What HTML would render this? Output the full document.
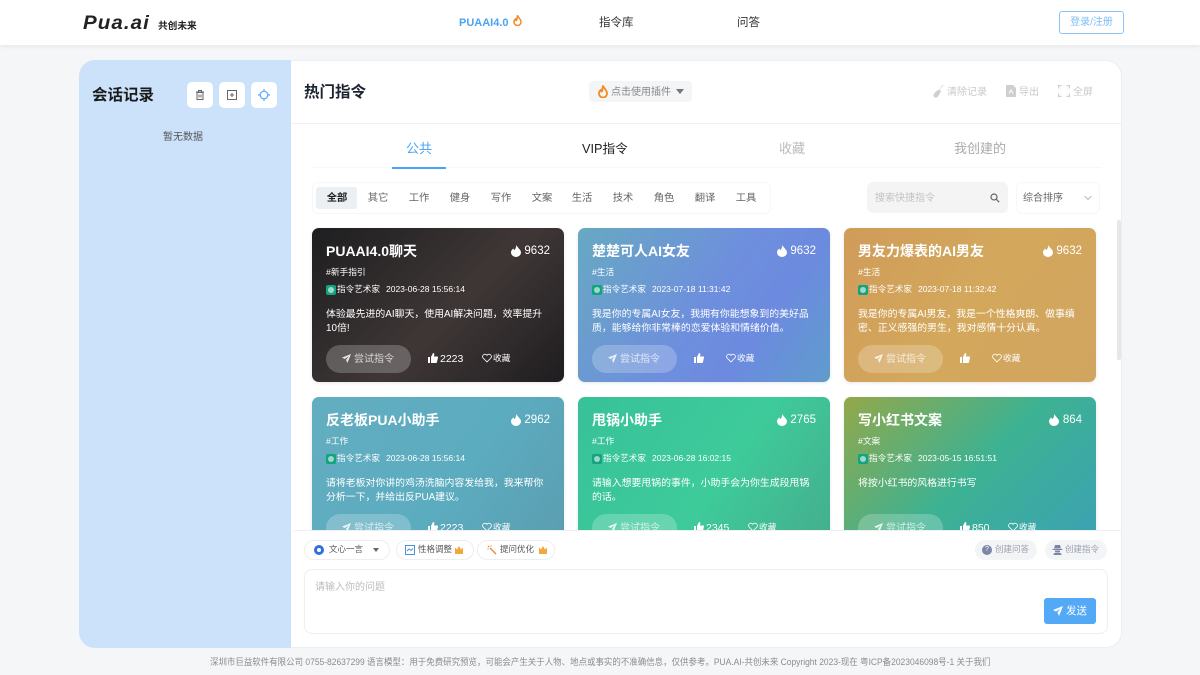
<!DOCTYPE html>
<html lang="zh"><head><meta charset="utf-8"><title>PUA.AI</title>
<style>
*{box-sizing:border-box;margin:0;padding:0}
html,body{width:1200px;height:675px;overflow:hidden}
body{background:#f5f6f8;font-family:"Liberation Sans","Noto Sans CJK SC",sans-serif;color:#222;position:relative;filter:blur(.3px)}
.a{position:absolute;white-space:nowrap}
svg{display:block}
.hdr{left:0;top:0;width:1200px;height:45px;background:#fff;box-shadow:0 1px 5px rgba(0,0,0,.08);z-index:3}
.main{left:79px;top:60px;width:1043px;height:588px;background:#fff;border-radius:16px;border:1px solid #eceef1;overflow:hidden}
.side{left:79px;top:60px;width:212px;height:588px;background:#cbe2fa;border-radius:16px 0 0 16px}
.sb{width:26px;height:26px;background:#fff;border-radius:5px;top:82px}
.sb svg{position:absolute;left:7px;top:7px}
.card{position:absolute;width:252px;height:154px;border-radius:7px;color:#fff;overflow:hidden;box-shadow:0 1px 3px rgba(0,0,0,.1)}
.card .a{line-height:1}
.t{left:14px;top:16px;font-size:14px;font-weight:700}
.hot{right:14px;top:18px;font-size:11.5px}
.fl{top:17px}
.tag{left:14px;top:40px;font-size:8.7px}
.av{left:14px;top:57px;width:10px;height:10px;border-radius:2px;background:#12a37f}
.av:after{content:"";position:absolute;left:2px;top:2px;width:6px;height:6px;border-radius:50%;background:#9fd8c8}
.au{left:25px;top:57px;font-size:8.6px}
.dt{left:74px;top:57px;font-size:8.5px}
.d{left:14px;top:80px;width:226px;font-size:9.9px;line-height:14px!important;white-space:normal;height:30px}
.btn{left:14px;top:117px;width:85px;height:28px;border-radius:14px;background:rgba(255,255,255,.22);font-size:10px;line-height:30px!important;padding-left:28px;color:rgba(255,255,255,.72)}
.btn svg{position:absolute;left:16px;top:9px}
.lk{left:116px;top:126px;font-size:10.5px;padding-left:12px}
.lk svg{position:absolute;left:0;top:-1px}
.fav{top:125px;font-size:8.7px;padding-left:11px;line-height:11px!important}
.fav svg{position:absolute;left:0;top:0}
.cat{top:192px;font-size:10.3px;color:#666;line-height:13px;width:30px;text-align:center}
.pill{top:540px;height:20px;border:1px solid #eceef1;border-radius:10px;background:#fff;font-size:8.5px;line-height:17px;color:#555}
.gp{top:540px;height:20px;border-radius:10px;background:#f3f4f6;font-size:8.5px;line-height:19px;color:#9a9fae}
.tool{top:87px;font-size:10px;color:#c9c9c9;line-height:12px}
</style></head><body>

<div class="a hdr"></div>
<div class="a" style="left:83px;top:14px;font-size:19px;font-weight:700;font-style:italic;letter-spacing:1px;color:#222;z-index:4;line-height:20px;transform-origin:left;transform:scaleX(1.08)">Pua.ai</div>
<div class="a" style="left:158px;top:21px;font-size:9.7px;font-weight:700;color:#222;z-index:4;line-height:12px">共创未来</div>
<div class="a" style="left:459px;top:16px;font-size:11px;font-weight:700;color:#4aa3f5;z-index:4;line-height:14px">PUAAI4.0</div>
<svg class="a" style="left:513px;top:15px;z-index:4" width="9" height="11" viewBox="0 0 9 11"><path d="M4.5.5C5 2.500 8 4 8 7a3.500 3.500 0 0 1-7 0c0-1.500.8-2.500 1.500-3 0 1 .5 1.500 1 1.500C4.500 4 4 2 4.500.5z" fill="none" stroke="#f58a1f" stroke-width="1.500"/></svg>
<div class="a" style="left:599px;top:15px;font-size:11.5px;color:#333;z-index:4;line-height:16px">指令库</div>
<div class="a" style="left:737px;top:15px;font-size:11.5px;color:#333;z-index:4;line-height:16px">问答</div>
<div class="a" style="left:1059px;top:11px;width:65px;height:23px;border:1px solid #8cc6f8;border-radius:3px;font-size:10px;line-height:22px;text-align:center;color:#7dbdf6;z-index:4">登录/注册</div>

<div class="a main"></div>
<div class="a side"></div>
<div class="a" style="left:92px;top:86px;font-size:15.5px;font-weight:700;line-height:19px;color:#1a1a1a">会话记录</div>
<div class="a sb" style="left:187px"><svg width="12" height="12" viewBox="0 0 12 12" fill="none" stroke="#666" stroke-width="1"><path d="M3 3.500h6v7H3zM2 3h8M4.500 3V1.500h3V3M5 5.500v3M7 5.500v3"/></svg></div>
<div class="a sb" style="left:219px"><svg width="12" height="12" viewBox="0 0 12 12" fill="none" stroke="#666" stroke-width="1"><path d="M1.500 1.500h9v9h-9zM6 4v4M4 6h4"/></svg></div>
<div class="a sb" style="left:251px"><svg width="12" height="12" viewBox="0 0 12 12" fill="none" stroke="#5aa9f6" stroke-width="1.200"><circle cx="6" cy="6" r="3.800"/><path d="M6 0v2M6 10v2M0 6h2M10 6h2"/></svg></div>
<div class="a" style="left:163px;top:131px;font-size:10px;color:#555;line-height:13px">暂无数据</div>

<div class="a" style="left:304px;top:83px;font-size:15.5px;font-weight:700;color:#1c2430;line-height:20px">热门指令</div>
<div class="a" style="left:589px;top:81px;width:103px;height:21px;background:#f4f5f6;border-radius:4px"></div>
<svg class="a" style="left:598px;top:85px" width="10" height="13" viewBox="0 0 10 13"><path d="M5 .5C5.500 3 9 5 9 8.500a4 4 0 0 1-8 0C1 6.500 2 5.500 2.800 5c0 1 .4 1.500 1 1.500C4.800 5 4.500 2.500 5 .5z" fill="none" stroke="#f58a1f" stroke-width="1.800"/></svg>
<div class="a" style="left:611px;top:86px;font-size:10px;color:#888;line-height:13px">点击使用插件</div>
<div class="a" style="left:676px;top:89px;width:0;height:0;border:4px solid transparent;border-top:5px solid #777;border-bottom:0"></div>
<svg class="a" style="left:932px;top:85px" width="12" height="13" viewBox="0 0 12 13"><path d="M11.500 0 7.500 4.500 9 6 7.500 9.500 5 12.500H1.500l1-2-1.500.5 1.500-3L5 5.500l1.500-.3L10.500 0z" fill="#cfcfcf"/></svg>
<div class="a tool" style="left:947px">清除记录</div>
<svg class="a" style="left:1006px;top:85px" width="10" height="12" viewBox="0 0 10 12"><path d="M0 0h7l3 3v9H0z" fill="#cfcfcf"/><path d="M3 8.500 5 5l2 3.500" stroke="#fff" fill="none"/></svg>
<div class="a tool" style="left:1019px">导出</div>
<svg class="a" style="left:1058px;top:85px" width="12" height="12" viewBox="0 0 12 12" fill="none" stroke="#cfcfcf" stroke-width="1.200"><path d="M.6 3.500V.6h3M8.500.6h2.900v2.900M11.400 8.500v2.900H8.500M3.500 11.400H.6V8.500"/></svg>
<div class="a tool" style="left:1073px">全屏</div>
<div class="a" style="left:291px;top:123px;width:830px;height:1px;background:#f0f1f3"></div>

<div class="a" style="left:406px;top:141px;font-size:13px;color:#4aa3f5;line-height:16px">公共</div>
<div class="a" style="left:582px;top:141px;font-size:12.7px;color:#222;line-height:16px">VIP指令</div>
<div class="a" style="left:779px;top:141px;font-size:13px;color:#bbb;line-height:16px">收藏</div>
<div class="a" style="left:954px;top:141px;font-size:13px;color:#aaa;line-height:16px">我创建的</div>
<div class="a" style="left:312px;top:167px;width:790px;height:1px;background:#f7f8f9"></div>
<div class="a" style="left:392px;top:167px;width:54px;height:1.500px;background:#4aa3f5"></div>

<div class="a" style="left:312px;top:182px;width:459px;height:32px;border:1px solid #f6f7f8;border-radius:6px"></div>
<div class="a" style="left:316px;top:187px;width:41px;height:22px;background:#edf0f3;border-radius:3px"></div>
<div class="a cat" style="left:322px;color:#222;font-weight:700">全部</div>
<div class="a cat" style="left:363px">其它</div>
<div class="a cat" style="left:404px">工作</div>
<div class="a cat" style="left:445px">健身</div>
<div class="a cat" style="left:486px">写作</div>
<div class="a cat" style="left:527px">文案</div>
<div class="a cat" style="left:567px">生活</div>
<div class="a cat" style="left:608px">技术</div>
<div class="a cat" style="left:649px">角色</div>
<div class="a cat" style="left:690px">翻译</div>
<div class="a cat" style="left:731px">工具</div>

<div class="a" style="left:867px;top:182px;width:141px;height:31px;background:#f4f4f5;border-radius:6px"></div>
<div class="a" style="left:875px;top:192px;font-size:10px;color:#c3c3c3;line-height:13px">搜索快捷指令</div>
<svg class="a" style="left:990px;top:193px" width="10" height="10" viewBox="0 0 10 10" fill="none" stroke="#666" stroke-width="1.200"><circle cx="4" cy="4" r="3"/><path d="m6.200 6.200 3 3"/></svg>
<div class="a" style="left:1016px;top:182px;width:84px;height:32px;border:1px solid #f6f7f8;border-radius:6px"></div>
<div class="a" style="left:1023px;top:192px;font-size:10px;color:#666;line-height:13px">综合排序</div>
<svg class="a" style="left:1084px;top:195px" width="8" height="6" viewBox="0 0 8 6" fill="none" stroke="#bbb"><path d="m.5 1 3.500 3.500L7.500 1"/></svg>
<div class="a" style="left:1117px;top:220px;width:4px;height:140px;background:#e6e7e9;border-radius:2px"></div>

<svg width="0" height="0" style="position:absolute"><defs>
<symbol id="fl" viewBox="0 0 10 12"><path d="M5.500 0C6 2.500 10 4.500 10 7.500a5 4.500 0 0 1-10 0C0 5.500 1.500 4 2.500 3.500c0 1 .5 1.500 1 1.500C4.800 4 5 1.500 5.500 0z" fill="#fff"/></symbol>
<symbol id="pl" viewBox="0 0 10 10"><path d="M10 0 0 4l3 1.500L7.500 2.500 4.500 6.500 6 10z" fill="currentColor"/></symbol>
<symbol id="th" viewBox="0 0 10 10"><path d="M0 4h2v6H0zM3 4l2-4c1 0 1.500 .7 1.300 1.700L6 3.500h3.200c.6 0 .9.500.8 1l-1 4.500c-.1.600-.5 1-1 1H3z" fill="#fff"/></symbol>
<symbol id="ht" viewBox="0 0 11 10"><path d="M5.500 9.300 1.200 5A2.600 2.600 0 0 1 5 1.500l.5.600.5-.6A2.600 2.600 0 0 1 9.800 5z" fill="none" stroke="#fff" stroke-width=".9"/></symbol>
</defs></svg>

<div class="a" style="left:291px;top:224px;width:826px;height:307px;overflow:hidden">

<div class="card" style="left:21px;top:4px;background:linear-gradient(135deg,#1e1e20 0%,#3f3736 55%,#1f1d20 100%)">
<div class="a t">PUAAI4.0聊天</div><svg class="a fl" style="left:199px" width="10" height="12"><use href="#fl"/></svg><div class="a hot">9632</div>
<div class="a tag">#新手指引</div><div class="a av"></div><div class="a au">指令艺术家</div><div class="a dt">2023-06-28 15:56:14</div>
<div class="a d">体验最先进的AI聊天&#65292;使用AI解决问题&#65292;效率提升10倍!</div>
<div class="a btn"><svg width="9" height="9" style="color:rgba(255,255,255,.85)"><use href="#pl"/></svg>尝试指令</div>
<div class="a lk"><svg width="10" height="10"><use href="#th"/></svg>2223</div>
<div class="a fav" style="left:170px"><svg width="10" height="10"><use href="#ht"/></svg>收藏</div>
</div>

<div class="card" style="left:287px;top:4px;background:linear-gradient(125deg,#67a9c2 0%,#6e8fdd 50%,#6c8adf 70%,#5f9ccd 100%)">
<div class="a t">楚楚可人AI女友</div><svg class="a fl" style="left:199px" width="10" height="12"><use href="#fl"/></svg><div class="a hot">9632</div>
<div class="a tag">#生活</div><div class="a av"></div><div class="a au">指令艺术家</div><div class="a dt">2023-07-18 11:31:42</div>
<div class="a d">我是你的专属AI女友&#65292;我拥有你能想象到的美好品质&#65292;能够给你非常棒的恋爱体验和情绪价值。</div>
<div class="a btn"><svg width="9" height="9" style="color:rgba(255,255,255,.85)"><use href="#pl"/></svg>尝试指令</div>
<div class="a lk"><svg width="10" height="10"><use href="#th"/></svg></div>
<div class="a fav" style="left:148px"><svg width="10" height="10"><use href="#ht"/></svg>收藏</div>
</div>

<div class="card" style="left:553px;top:4px;background:linear-gradient(125deg,#d09c59 0%,#d3a85c 50%,#d1a55f 100%)">
<div class="a t">男友力爆表的AI男友</div><svg class="a fl" style="left:199px" width="10" height="12"><use href="#fl"/></svg><div class="a hot">9632</div>
<div class="a tag">#生活</div><div class="a av"></div><div class="a au">指令艺术家</div><div class="a dt">2023-07-18 11:32:42</div>
<div class="a d">我是你的专属AI男友&#65292;我是一个性格爽朗、做事缜密、正义感强的男生&#65292;我对感情十分认真。</div>
<div class="a btn"><svg width="9" height="9" style="color:rgba(255,255,255,.85)"><use href="#pl"/></svg>尝试指令</div>
<div class="a lk"><svg width="10" height="10"><use href="#th"/></svg></div>
<div class="a fav" style="left:148px"><svg width="10" height="10"><use href="#ht"/></svg>收藏</div>
</div>

<div class="card" style="left:21px;top:173px;background:linear-gradient(125deg,#63adbf 0%,#5cacc0 55%,#5b9db0 100%)">
<div class="a t">反老板PUA小助手</div><svg class="a fl" style="left:199px" width="10" height="12"><use href="#fl"/></svg><div class="a hot">2962</div>
<div class="a tag">#工作</div><div class="a av"></div><div class="a au">指令艺术家</div><div class="a dt">2023-06-28 15:56:14</div>
<div class="a d">请将老板对你讲的鸡汤洗脑内容发给我&#65292;我来帮你分析一下&#65292;并给出反PUA建议。</div>
<div class="a btn"><svg width="9" height="9" style="color:rgba(255,255,255,.85)"><use href="#pl"/></svg>尝试指令</div>
<div class="a lk"><svg width="10" height="10"><use href="#th"/></svg>2223</div>
<div class="a fav" style="left:170px"><svg width="10" height="10"><use href="#ht"/></svg>收藏</div>
</div>

<div class="card" style="left:287px;top:173px;background:linear-gradient(125deg,#38c199 0%,#3ecb9a 55%,#45ac8d 100%)">
<div class="a t">甩锅小助手</div><svg class="a fl" style="left:199px" width="10" height="12"><use href="#fl"/></svg><div class="a hot">2765</div>
<div class="a tag">#工作</div><div class="a av"></div><div class="a au">指令艺术家</div><div class="a dt">2023-06-28 16:02:15</div>
<div class="a d">请输入想要甩锅的事件&#65292;小助手会为你生成段甩锅的话。</div>
<div class="a btn"><svg width="9" height="9" style="color:rgba(255,255,255,.85)"><use href="#pl"/></svg>尝试指令</div>
<div class="a lk"><svg width="10" height="10"><use href="#th"/></svg>2345</div>
<div class="a fav" style="left:170px"><svg width="10" height="10"><use href="#ht"/></svg>收藏</div>
</div>

<div class="card" style="left:553px;top:173px;background:linear-gradient(135deg,#93a84a 0%,#3db292 50%,#3ba1b5 100%)">
<div class="a t">写小红书文案</div><svg class="a fl" style="left:205px" width="10" height="12"><use href="#fl"/></svg><div class="a hot">864</div>
<div class="a tag">#文案</div><div class="a av"></div><div class="a au">指令艺术家</div><div class="a dt">2023-05-15 16:51:51</div>
<div class="a d">将按小红书的风格进行书写</div>
<div class="a btn"><svg width="9" height="9" style="color:rgba(255,255,255,.85)"><use href="#pl"/></svg>尝试指令</div>
<div class="a lk"><svg width="10" height="10"><use href="#th"/></svg>850</div>
<div class="a fav" style="left:164px"><svg width="10" height="10"><use href="#ht"/></svg>收藏</div>
</div>
</div>

<div class="a" style="left:291px;top:530px;width:830px;height:117px;background:#fff;border-top:1px solid #eef0f2;border-radius:6px 0 16px 0"></div>

<div class="a pill" style="left:304px;width:86px;padding-left:24px">文心一言</div>
<div class="a" style="left:314px;top:545px;width:10px;height:10px;border-radius:50%;border:3px solid #2f6fe0"></div>
<div class="a" style="left:373px;top:548px;width:0;height:0;border:3.500px solid transparent;border-top:4px solid #666;border-bottom:0"></div>
<div class="a pill" style="left:396px;width:78px;padding-left:21px">性格调整</div>
<svg class="a" style="left:405px;top:545px" width="10" height="10" viewBox="0 0 10 10" fill="none" stroke="#4a90e2"><path d="M.5.500h9v9h-9zM2 6l2-2 2 1.500L8 3.500"/></svg>
<div class="a pill" style="left:477px;width:78px;padding-left:22px">提问优化</div>
<svg class="a" style="left:487px;top:545px" width="10" height="10" viewBox="0 0 10 10" fill="none" stroke="#e8863a" stroke-width="1.300"><path d="M9 9 3 3M1 1l1 1M4 .5v1M.5 4h1"/></svg>
<svg class="a" style="left:454px;top:545px" width="10" height="10" viewBox="0 0 10 10"><path d="M1 2.500 3 4.500 5 1l2 3.500 2-2V9H1z" fill="#f3a83b"/></svg>
<svg class="a" style="left:538px;top:545px" width="10" height="10" viewBox="0 0 10 10"><path d="M1 2.500 3 4.500 5 1l2 3.500 2-2V9H1z" fill="#f3a83b"/></svg>

<div class="a gp" style="left:975px;width:62px;padding-left:20px">创建问答</div>
<div class="a" style="left:982px;top:545px;width:10px;height:10px;border-radius:50%;background:#7c84a8;color:#fff;font-size:7px;line-height:10px;text-align:center">?</div>
<div class="a gp" style="left:1045px;width:62px;padding-left:20px">创建指令</div>
<svg class="a" style="left:1052px;top:545px" width="11" height="10" viewBox="0 0 11 10"><path d="M3 0h5l1 3.500H2zM.5 4h10v1H.5zM3 5.500h5V7H3zM1.500 10c0-2 1.500-2.500 4-2.500s4 .5 4 2.500z" fill="#7c84a8"/></svg>

<div class="a" style="left:304px;top:569px;width:804px;height:65px;border:1px solid #eceef1;border-radius:8px;background:#fff"></div>
<div class="a" style="left:315px;top:581px;font-size:10px;color:#bdbdbd;line-height:13px">请输入你的问题</div>
<div class="a" style="left:1044px;top:598px;width:52px;height:26px;background:#54a9f7;border-radius:3px;color:#fff;font-size:10.5px;line-height:27px;padding-left:22px">发送</div>
<svg class="a" style="left:1053px;top:606px;color:#fff" width="10" height="10"><use href="#pl"/></svg>

<div class="a" style="left:210px;top:656px;font-size:9px;color:#8c8c8c;line-height:12px;transform-origin:left top;transform:scaleX(.94)">深圳市巨益软件有限公司 0755-82637299 语言模型&#65306;用于免费研究预览&#65292;可能会产生关于人物、地点或事实的不准确信息&#65292;仅供参考。PUA.AI-共创未来 Copyright 2023-现在 粤ICP备2023046098号-1 关于我们</div>
</body></html>
